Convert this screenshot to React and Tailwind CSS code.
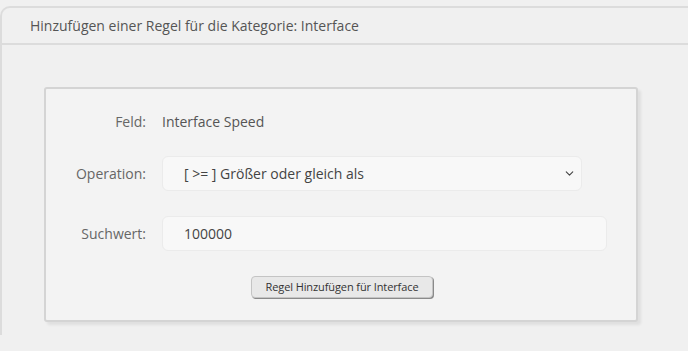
import React from "react";
import { ChevronDown } from "lucide-react";

export default function App() {
  return (
    <div className="w-[688px] h-[351px] overflow-hidden bg-[#f0f0f0] pt-[6px] font-['Open_Sans',sans-serif]">
      <div className="w-[720px] h-[329px] border-t-2 border-l-2 border-[#dcdcdc] rounded-tl-[10px]">
        <div className="h-[37px] border-b-2 border-[#dcdcdc] pl-[28px] flex items-center">
          <span className="text-[14px] text-[#555]">
            Hinzufügen einer Regel für die Kategorie: Interface
          </span>
        </div>
        <div className="pt-[42px] pl-[42px]">
          <div className="w-[594px] h-[235px] bg-[#f3f3f3] border-2 border-[#d4d4d4] rounded-[3px] shadow-[3px_3px_3px_rgba(0,0,0,0.07)] pt-[15px] flex flex-col">
            <div className="flex items-center h-[35px]">
              <div className="w-[100px] text-right text-[14px] text-[#666]">Feld:</div>
              <div className="ml-[16px] text-[14px] text-[#555]">Interface Speed</div>
            </div>
            <div className="flex items-center mt-[17px]">
              <div className="w-[100px] text-right text-[14px] text-[#666]">Operation:</div>
              <div className="ml-[16px] w-[420px] h-[35px] bg-[#f8f8f8] border border-[#ebebeb] rounded-[6px] flex items-center pl-[21px] pr-[4px]">
                <span className="flex-1 text-[14px] text-[#444]">[ &gt;= ] Größer oder gleich als</span>
                <ChevronDown size={13} strokeWidth={2} className="text-[#444] mr-[1px]" />
              </div>
            </div>
            <div className="flex items-center mt-[25px]">
              <div className="w-[100px] text-right text-[14px] text-[#666]">Suchwert:</div>
              <div className="ml-[16px] w-[445px] h-[35px] bg-[#f8f8f8] border border-[#ebebeb] rounded-[6px] flex items-center pl-[21px]">
                <span className="text-[14px] text-[#444]">100000</span>
              </div>
            </div>
            <div className="flex mt-[25px] pl-[205px]">
              <div className="w-[182px] h-[22px] bg-[#e8e8e8] border border-[#c4c4c4] rounded-[4px] shadow-[1px_1px_0_#8a8a8a] flex items-center justify-center text-[11px] tracking-[-0.1px] text-[#333]">
                Regel Hinzufügen für Interface
              </div>
            </div>
          </div>
        </div>
      </div>
    </div>
  );
}
